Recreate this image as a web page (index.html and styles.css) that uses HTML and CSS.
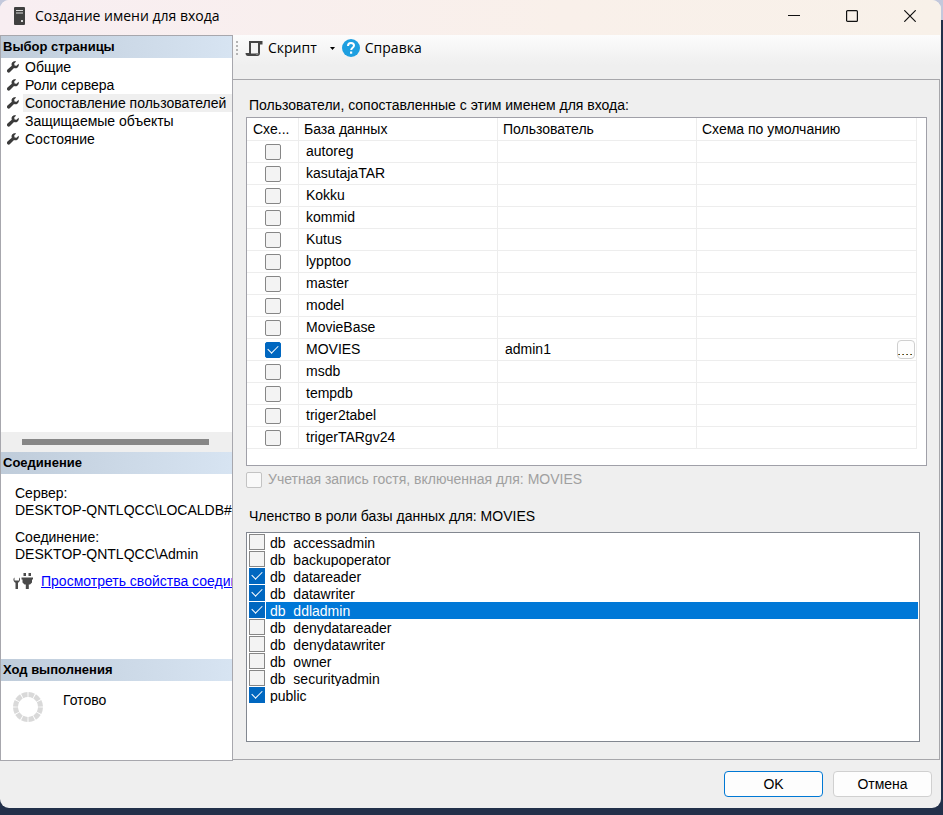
FILE: index.html
```html
<!DOCTYPE html>
<html lang="ru">
<head>
<meta charset="utf-8">
<title>Создание имени для входа</title>
<link rel="stylesheet" href="styles.css">
</head>
<body>
<svg class="defs" aria-hidden="true">
  <symbol id="wrench" viewBox="0 0 12 12">
    <path d="M11.6 2.800 9.500 4.800 7.600 4.400 7.200 2.500 9.200.4C7.600-.2 5.600.3 4.800 2.100c-.4.9-.3 1.800 0 2.600L.5 8.500c-.8.8-.6 2-.1 2.600.7.700 1.900.7 2.600 0L7 7.100c1.100.5 2.600.3 3.600-.6 1.200-1.100 1.500-2.400 1-3.700z" fill="#3b3b3b"/>
  </symbol>
</svg>
<main class="window">
  <header class="titlebar">
    <svg class="app-icon" width="11" height="18" viewBox="0 0 11 18" aria-hidden="true">
      <rect width="11" height="18" rx="1" fill="#404040"/>
      <path d="M2 3.500h7M2 6h7" stroke="#d8d8d8" stroke-width="1.200"/>
      <rect x="7" y="13" width="2" height="2" fill="#d8d8d8"/>
    </svg>
    <h1>Создание имени для входа</h1>
    <div class="window-buttons">
      <button type="button" aria-label="Свернуть"><svg width="12" height="12" viewBox="0 0 12 12"><path d="M0 5.500h12" stroke="#111"/></svg></button>
      <button type="button" aria-label="Развернуть"><svg width="12" height="12" viewBox="0 0 12 12"><rect x=".6" y=".6" width="10.800" height="10.800" rx="1" fill="none" stroke="#111" stroke-width="1.200"/></svg></button>
      <button type="button" aria-label="Закрыть"><svg width="12" height="12" viewBox="0 0 12 12"><path d="M.3.3l11.400 11.400M11.700.3.3 11.700" stroke="#111" stroke-width="1.200"/></svg></button>
    </div>
  </header>

  <div class="columns">
    <aside class="sidebar">
      <section class="pages">
        <h2>Выбор страницы</h2>
        <ul>
          <li><svg class="wrench"><use href="#wrench"/></svg><a href="#">Общие</a></li>
          <li><svg class="wrench"><use href="#wrench"/></svg><a href="#">Роли сервера</a></li>
          <li><svg class="wrench"><use href="#wrench"/></svg><a href="#" class="current">Сопоставление пользователей</a></li>
          <li><svg class="wrench"><use href="#wrench"/></svg><a href="#">Защищаемые объекты</a></li>
          <li><svg class="wrench"><use href="#wrench"/></svg><a href="#">Состояние</a></li>
        </ul>
        <div class="scrollbar"><div class="thumb"></div></div>
      </section>
      <section class="connection">
        <h2>Соединение</h2>
        <dl>
          <dt>Сервер:</dt>
          <dd>DESKTOP-QNTLQCC\LOCALDB#B</dd>
          <dt>Соединение:</dt>
          <dd>DESKTOP-QNTLQCC\Admin</dd>
        </dl>
        <p class="properties">
          <svg width="20" height="18" viewBox="0 0 20 18" aria-hidden="true" fill="#4a4a4a">
            <path d="M1.500 5.500C0 6.500 0 9.500 2.500 10.800V17h2.500v-6.200C7.500 9.500 7.500 6.500 6 5.500V8.500H1.500z"/>
            <path d="M10.500 1H13v3h-2.500zM15.500 1H18v3h-2.500zM8.500 5.500H20v2h-1v3L17 12.500h-1.200V17h-3v-4.500H11.500L9.500 10.500v-3h-1z"/>
          </svg>
          <a href="#">Просмотреть свойства соединения</a>
        </p>
      </section>
      <section class="progress">
        <h2>Ход выполнения</h2>
        <div class="status">
          <svg width="30" height="30" viewBox="0 0 30 30" aria-hidden="true">
            <circle cx="15" cy="15" r="12.500" fill="none" stroke="#d9d9d9" stroke-width="5" pathLength="120" stroke-dasharray="8.500 1.500" stroke-dashoffset="-.75"/>
          </svg>
          <span>Готово</span>
        </div>
      </section>
    </aside>

    <section class="content">
      <div class="toolbar">
        <span class="grip"></span>
        <button type="button" class="script">
          <svg width="18" height="17" viewBox="0 0 18 17" aria-hidden="true">
            <path d="M4 1H17.500V4.500H15V13c0 2-1 3-2.500 3H3C1.500 16 .5 15 .5 13H4z" fill="#454545"/>
            <path d="M6 3H13V13.500H6z" fill="#f3f3f3"/>
            <path d="M10.500 13c0 1.200.5 2 1.500 2s1.500-.8 1.500-2" fill="#8a8a8a"/>
          </svg>
          Скрипт
          <svg class="arrow" width="5" height="3" viewBox="0 0 5 3" aria-hidden="true"><path d="M0 0h5L2.500 3z"/></svg>
        </button>
        <button type="button" class="help">
          <svg width="18" height="18" viewBox="0 0 18 18" aria-hidden="true">
            <circle cx="9" cy="9" r="9" fill="#1e9fe0"/>
            <path d="M6 6.900C6 5 7.300 4 9 4s3 1 3 2.500c0 2.200-2.800 2.200-2.800 4.500" fill="none" stroke="#fff" stroke-width="2"/>
            <rect x="8" y="12.500" width="2.200" height="2.200" fill="#fff"/>
          </svg>
          Справка
        </button>
      </div>

      <div class="page">
        <h3 id="users-title">Пользователи, сопоставленные с этим именем для входа:</h3>
        <div class="grid">
          <table aria-labelledby="users-title">
            <colgroup><col class="col-map"><col class="col-text"><col class="col-text"><col></colgroup>
            <thead><tr><th>Схе...</th><th>База данных</th><th>Пользователь</th><th>Схема по умолчанию</th></tr></thead>
            <tbody>
              <tr><td><input type="checkbox" aria-label="autoreg"></td><td>autoreg</td><td></td><td></td></tr>
              <tr><td><input type="checkbox" aria-label="kasutajaTAR"></td><td>kasutajaTAR</td><td></td><td></td></tr>
              <tr><td><input type="checkbox" aria-label="Kokku"></td><td>Kokku</td><td></td><td></td></tr>
              <tr><td><input type="checkbox" aria-label="kommid"></td><td>kommid</td><td></td><td></td></tr>
              <tr><td><input type="checkbox" aria-label="Kutus"></td><td>Kutus</td><td></td><td></td></tr>
              <tr><td><input type="checkbox" aria-label="lypptoo"></td><td>lypptoo</td><td></td><td></td></tr>
              <tr><td><input type="checkbox" aria-label="master"></td><td>master</td><td></td><td></td></tr>
              <tr><td><input type="checkbox" aria-label="model"></td><td>model</td><td></td><td></td></tr>
              <tr><td><input type="checkbox" aria-label="MovieBase"></td><td>MovieBase</td><td></td><td></td></tr>
              <tr><td><input type="checkbox" aria-label="MOVIES" checked></td><td>MOVIES</td><td>admin1</td><td class="browse-cell"><button type="button" class="browse" aria-label="Выбрать схему"><span class="dots"></span></button></td></tr>
              <tr><td><input type="checkbox" aria-label="msdb"></td><td>msdb</td><td></td><td></td></tr>
              <tr><td><input type="checkbox" aria-label="tempdb"></td><td>tempdb</td><td></td><td></td></tr>
              <tr><td><input type="checkbox" aria-label="triger2tabel"></td><td>triger2tabel</td><td></td><td></td></tr>
              <tr><td><input type="checkbox" aria-label="trigerTARgv24"></td><td>trigerTARgv24</td><td></td><td></td></tr>
            </tbody>
          </table>
        </div>
        <label class="guest"><input type="checkbox" disabled><span>Учетная запись гостя, включенная для: MOVIES</span></label>
        <h3>Членство в роли базы данных для: MOVIES</h3>
        <div class="roles">
          <label><input type="checkbox"><span>db_accessadmin</span></label>
          <label><input type="checkbox"><span>db_backupoperator</span></label>
          <label><input type="checkbox" checked><span>db_datareader</span></label>
          <label><input type="checkbox" checked><span>db_datawriter</span></label>
          <label class="selected"><input type="checkbox" checked><span>db_ddladmin</span></label>
          <label><input type="checkbox"><span>db_denydatareader</span></label>
          <label><input type="checkbox"><span>db_denydatawriter</span></label>
          <label><input type="checkbox"><span>db_owner</span></label>
          <label><input type="checkbox"><span>db_securityadmin</span></label>
          <label><input type="checkbox" checked><span>public</span></label>
        </div>
      </div>
    </section>
  </div>

  <footer class="actions">
    <button type="button" class="primary">OK</button>
    <button type="button">Отмена</button>
  </footer>
</main>
</body>
</html>
```
FILE: styles.css
```css
* { box-sizing: border-box; }

body {
  display: flex;
  min-height: 100vh;
  margin: 0;
  padding: 0 2px 7px 0;
  background: linear-gradient(#c3c8dc 20px, #22304a 20px);
  font: 14px/17px "Liberation Sans", sans-serif;
  color: #000;
}

h1, h2, h3, ul, dl, dd, p { margin: 0; padding: 0; }
button { font: inherit; color: inherit; }

.defs { position: absolute; width: 0; height: 0; }

.window {
  display: flex;
  flex: 1;
  flex-direction: column;
  min-width: 0;
  overflow: hidden;
  border-radius: 9px;
  background: #efefef;
}

/* Title bar */
.titlebar {
  display: flex;
  align-items: center;
  height: 35px;
  padding: 0 2px 3px 14px;
  background: linear-gradient(90deg, #f8eef2, #f9f0ea 60%, #f8f1e9);
}
.titlebar h1 {
  margin-left: 10px;
  font: 14px/20px "Open Sans", sans-serif;
}
.window-buttons { display: flex; margin-left: auto; }
.window-buttons button {
  display: grid;
  place-items: center;
  width: 58px;
  height: 32px;
  padding: 0;
  border: 0;
  background: none;
}

.columns { display: flex; flex: 1; }

/* Sidebar */
.sidebar {
  display: flex;
  flex: 0 0 233px;
  flex-direction: column;
  min-width: 0;
  overflow: hidden;
  border: 1px solid #a7a7ad;
  background: #fff;
  white-space: nowrap;
}
.sidebar h2 {
  padding: 0 2px;
  background: linear-gradient(90deg, #bfccda, #d7e4f2);
  font-size: 13px;
  line-height: 22px;
}
.pages { display: flex; flex: 1; flex-direction: column; }
.pages ul { flex: 1; list-style: none; }
.pages li { display: flex; height: 18px; }
.pages a {
  flex: 1;
  padding-left: 2px;
  color: inherit;
  line-height: 18px;
  text-decoration: none;
}
.pages .current { background: #efefef; }
.wrench { width: 12px; height: 12px; margin: 3px 4px 0 6px; }
.scrollbar { padding: 7px 23px 7px 21px; background: #efefef; }
.thumb { height: 6px; background: #878787; }

.connection { min-height: 207px; }
.connection dl { padding: 11px 0 0 14px; }
.connection dd + dt { margin-top: 10px; }
.properties {
  display: flex;
  align-items: center;
  gap: 8px;
  margin-top: 9px;
  padding-left: 12px;
}
.properties svg { flex: none; }
.properties a { color: #00f; }

.progress { min-height: 101px; }
.status { display: flex; gap: 20px; padding: 11px 12px; }

/* Main pane */
.content {
  display: flex;
  flex: 1;
  flex-direction: column;
  min-width: 0;
  margin: 0 1px 1px 0;
}
.toolbar {
  display: flex;
  align-items: center;
  height: 44px;
  padding: 0 3px 18px;
  background: linear-gradient(#fcfcfc, #efefef 30px);
  font: 14px/20px "Open Sans", sans-serif;
}
.toolbar button {
  display: flex;
  align-items: center;
  padding: 0;
  border: 0;
  background: none;
}
.grip {
  width: 2px;
  height: 14px;
  background: repeating-linear-gradient(#b4b4b4 0 2px, transparent 2px 4px);
}
.script { gap: 5px; margin-left: 7px; }
.arrow { margin-left: 8px; }
.help { gap: 5px; margin-left: 7px; }

.page {
  flex: 1;
  padding: 17px 12px 17px 13px;
  border: 1px solid #a7a7ab;
  border-left: 0;
}
.page h3 {
  padding-left: 3px;
  font-size: 14px;
  font-weight: normal;
}

input[type="checkbox"] {
  display: grid;
  flex: none;
  place-items: center;
  appearance: none;
  width: 16px;
  height: 16px;
  margin: 0;
  border: 1px solid #868686;
  border-radius: 2px;
  background: #f3f3f3;
}
input[type="checkbox"]:checked { border-color: #0067c0; background: #0067c0; }
input[type="checkbox"]:checked::before {
  content: "";
  width: 9px;
  height: 5px;
  margin-bottom: 5px;
  border: solid #fff;
  border-width: 0 0 1px 1px;
  transform: rotate(-45deg);
}
input[type="checkbox"]:disabled { border-color: #c3c3c3; background: #f9f9f9; }

/* Database grid */
.grid {
  min-height: 349px;
  margin-top: 3px;
  padding-right: 9px;
  border: 1px solid #a0a0a8;
  background: #fff;
}
table { width: 100%; border-collapse: separate; border-spacing: 0; table-layout: fixed; }
.col-map { width: 52px; }
.col-text { width: 199px; }
th, td {
  height: 22px;
  padding: 0 0 1px 7px;
  overflow: hidden;
  border: solid #ededed;
  border-width: 0 1px 1px 0;
  line-height: 18px;
  text-align: left;
  white-space: nowrap;
}
th { height: 23px; padding: 0 0 0 5px; font-weight: normal; }
th:first-child { padding-left: 6px; }
td:first-child { padding: 1px 0 0 18px; }
td.browse-cell { padding: 0; }
.browse {
  display: flex;
  align-items: flex-end;
  width: 18px;
  height: 19px;
  margin: 0 1px 0 auto;
  padding: 0 0 3px;
  border: 1px solid #cfcfcf;
  border-radius: 4px;
  background: #fdfdfd;
}
.dots {
  width: 15px;
  height: 1px;
  background: repeating-linear-gradient(90deg, #b06a10 0 1px, #24505c 1px 2px, transparent 2px 4px);
}

.guest {
  display: flex;
  align-items: center;
  gap: 6px;
  margin: 5px 0 20px;
  color: #a0a0a0;
}

/* Role list */
.roles {
  min-height: 210px;
  margin: 7px 7px 0 0;
  padding: 1px;
  border: 1px solid #828790;
  background: #fff;
}
.roles label { display: flex; gap: 1px; height: 17px; padding-left: 1px; }
.roles input { border-radius: 0; }
.roles span {
  flex: 1;
  height: 16px;
  padding-left: 4px;
  overflow: hidden;
  line-height: 19px;
}
/* The fill reaches the next row while the text stays clipped at 16px */
.roles .selected span {
  height: 17px;
  border-bottom: 1px solid #0078d7;
  background: #0078d7;
  color: #fff;
}

/* Footer */
.actions {
  display: flex;
  justify-content: flex-end;
  gap: 10px;
  padding: 10px 9px 11px;
}
.actions button {
  width: 99px;
  height: 26px;
  padding: 0;
  border: 1px solid #d0d0d0;
  border-radius: 4px;
  background: #fdfdfd;
}
.actions .primary { border-color: #0078d4; }
```
